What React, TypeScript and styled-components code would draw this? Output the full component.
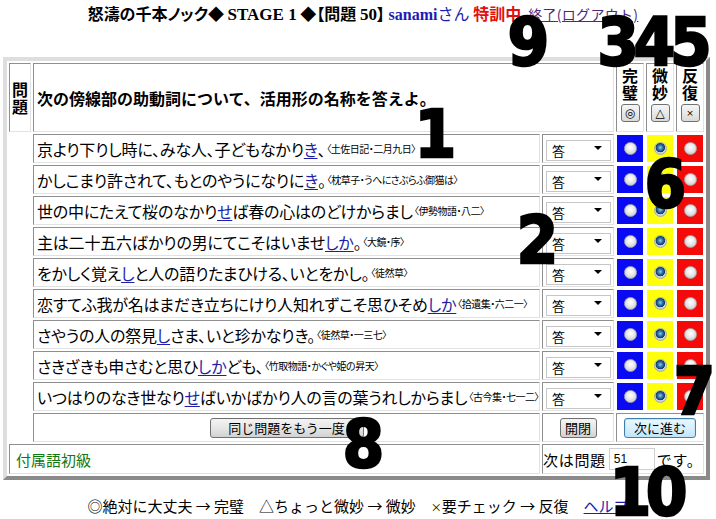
import React from "react";
import styled, { createGlobalStyle, css } from "styled-components";

const GlobalStyle = createGlobalStyle`
  html, body {
    margin: 0;
    padding: 0;
    background: #fff;
  }
  body {
    font-family: "Noto Sans CJK JP", sans-serif;
    color: #000;
  }
`;

const Page = styled.div`
  position: relative;
  width: 716px;
  height: 519px;
  overflow: hidden;
`;

const TitleBar = styled.div`
  height: 26px;
  line-height: 26px;
  margin-bottom: 31px;
  padding-left: 10px;
  text-align: center;
  white-space: pre;
  font-size: 16px;
  font-weight: bold;
  font-feature-settings: "palt";
`;

const Serif = styled.span`
  font-family: "Liberation Serif", serif;
  font-size: 17px;
  font-weight: bold;
`;

const UserName = styled(Serif)`
  color: #1c1cb4;
  font-size: 16px;
`;

const San = styled.span`
  color: #1c1cb4;
  font-weight: normal;
  font-feature-settings: normal;
`;

const Training = styled.span`
  color: #e01010;
  font-feature-settings: normal;
`;

const Logout = styled.a`
  margin-left: 7px;
  font-size: 14px;
  letter-spacing: 0.3px;
  font-weight: normal;
  font-feature-settings: normal;
  color: #4b2a7a;
  text-decoration: underline;
`;

const Board = styled.div`
  display: grid;
  grid-template-columns: 22px 507px 72px 28px 28px 28px;
  grid-template-rows: 69px repeat(9, 29px) 29px 30px;
  gap: 2px;
  padding: 2px;
  width: max-content;
  margin-left: 3px;
  border: 4px solid;
  border-color: #dedede #8a8a8a #8a8a8a #dedede;
`;

const Cell = styled.div<{ $span?: number; $center?: boolean }>`
  grid-column: span ${(p) => p.$span ?? 1};
  box-sizing: border-box;
  border: 1px solid;
  border-color: #8f8f8f #e2e2e2 #e2e2e2 #8f8f8f;
  background: #fff;
  display: flex;
  align-items: center;
  justify-content: ${(p) => (p.$center ? "center" : "flex-start")};
  min-width: 0;
`;

const Blank = styled.div``;

const StackLabel = styled(Cell)`
  flex-direction: column;
  justify-content: center;
  font-size: 16px;
  font-weight: bold;
  line-height: 17px;
`;

const Question = styled(Cell)`
  padding-left: 3px;
  font-size: 16px;
  font-weight: bold;
`;

const RankHead = styled(Cell)`
  flex-direction: column;
  justify-content: flex-start;
  padding-top: 3px;
  font-size: 16px;
  font-weight: bold;
  line-height: 17px;
`;

const MiniButton = styled.button<{ $small?: boolean }>`
  margin-top: 3px;
  width: 19px;
  height: 18px;
  padding: 0;
  border: 1px solid #707070;
  border-radius: 3px;
  background: linear-gradient(#f6f6f6, #dadada);
  font-family: "DejaVu Sans", sans-serif;
  font-size: ${(p) => (p.$small ? "9px" : "12px")};
  line-height: 16px;
  color: #000;
`;

const Sentence = styled(Cell)`
  padding-left: 3px;
  font-size: 16px;
  letter-spacing: -0.2px;
  white-space: nowrap;
  overflow: hidden;
  font-feature-settings: "palt";
`;

const Mark = styled.span`
  color: #1e1ea8;
  text-decoration: underline;
  text-underline-offset: 2px;
`;

const Note = styled.span`
  font-size: 10px;
  letter-spacing: -0.5px;
  margin-left: 1px;
`;

const SelectBox = styled.div`
  position: relative;
  margin-left: 3px;
  &::after {
    content: "";
    position: absolute;
    right: 9px;
    top: 9px;
    border-left: 4px solid transparent;
    border-right: 4px solid transparent;
    border-top: 4px solid #000;
    pointer-events: none;
  }
`;

const Select = styled.select`
  appearance: none;
  width: 65px;
  height: 21px;
  padding: 0 0 0 5px;
  border: 1px solid #c6c6c6;
  background: #fff;
  font-family: "Noto Sans CJK JP", sans-serif;
  font-size: 13px;
  color: #000;
`;

const ColorCell = styled.div<{ $color: string }>`
  box-sizing: border-box;
  border: 1px solid #fff;
  background: ${(p) => p.$color};
  display: flex;
  align-items: center;
  justify-content: center;
`;

const Radio = styled.input`
  appearance: none;
  margin: 0;
  width: 13px;
  height: 13px;
  border-radius: 50%;
  border: 1px solid #a4abb2;
  box-sizing: border-box;
  background: radial-gradient(circle at 50% 40%, #ffffff 0%, #e8e8e8 45%, #bcbcbc 100%);
  ${(p) =>
    p.checked &&
    css`
      background: radial-gradient(
        circle at 48% 42%,
        #9cc8ea 0%,
        #2c6ea4 30%,
        #0f3b68 52%,
        #d6d6d6 58%,
        #b4b4b4 100%
      );
    `}
`;

const PushButton = styled.button<{ $w: number; $primary?: boolean }>`
  width: ${(p) => p.$w}px;
  height: 20px;
  padding: 0;
  border: 1px solid #707070;
  border-radius: 3px;
  background: linear-gradient(#f4f4f4 0%, #e6e6e6 50%, #d2d2d2 100%);
  font-family: "Noto Sans CJK JP", sans-serif;
  font-size: 13px;
  line-height: 18px;
  color: #000;
  ${(p) =>
    p.$primary &&
    css`
      border-color: #3c7fb1;
      background: linear-gradient(#eaf6fd 0%, #d9f0fc 50%, #bee6fd 100%);
      box-shadow: inset 0 0 0 1px #c4e5f6;
    `}
`;

const Series = styled(Cell)`
  padding-left: 6px;
  color: #117711;
  font-size: 15px;
`;

const NextInfo = styled(Cell)`
  font-size: 15px;
  white-space: nowrap;
  letter-spacing: 0.7px;
`;

const NumInput = styled.input`
  width: 46px;
  height: 22px;
  margin: 0 2px 0 3px;
  box-sizing: border-box;
  padding: 0 4px;
  border: 1px solid #cfcfcf;
  font-family: "Liberation Sans", sans-serif;
  font-size: 12px;
`;

const Legend = styled.div`
  margin-top: 17px;
  height: 18px;
  line-height: 18px;
  text-align: center;
  font-size: 15px;
  white-space: pre;
`;

const Cross = styled.span`
  font-size: 11px;
`;

const Help = styled.a`
  color: #1c1cb4;
  text-decoration: underline;
`;

const Callout = styled.div<{ $x: number; $y: number }>`
  position: absolute;
  left: ${(p) => p.$x}px;
  top: ${(p) => p.$y - 8}px;
  transform: translateX(-50%);
  font-family: "DejaVu Sans", sans-serif;
  font-stretch: condensed;
  font-weight: bold;
  font-size: 66px;
  line-height: 66px;
  letter-spacing: -5px;
  color: #000;
  -webkit-text-stroke: 2.5px #000;
  text-shadow: 0 0 1px #fff;
  pointer-events: none;
`;

type Row = {
  before: string;
  mark: string;
  after: string;
  note: string;
};

const rows: Row[] = [
  { before: "京より下りし時に、みな人、子どもなかり", mark: "き", after: "、", note: "〈土佐日記・二月九日〉" },
  { before: "かしこまり許されて、もとのやうになりに", mark: "き", after: "。", note: "〈枕草子・うへにさぶらふ御猫は〉" },
  { before: "世の中にたえて桜のなかり", mark: "せ", after: "ば春の心はのどけからまし", note: "〈伊勢物語・八二〉" },
  { before: "主は二十五六ばかりの男にてこそはいませ", mark: "しか", after: "。", note: "〈大鏡・序〉" },
  { before: "をかしく覚え", mark: "し", after: "と人の語りたまひける、いとをかし。", note: "〈徒然草〉" },
  { before: "恋すてふ我が名はまだき立ちにけり人知れずこそ思ひそめ", mark: "しか", after: "", note: "〈拾遺集・六二一〉" },
  { before: "さやうの人の祭見", mark: "し", after: "さま、いと珍かなりき。", note: "〈徒然草・一三七〉" },
  { before: "さきざきも申さむと思ひ", mark: "しか", after: "ども、", note: "〈竹取物語・かぐや姫の昇天〉" },
  { before: "いつはりのなき世なり", mark: "せ", after: "ばいかばかり人の言の葉うれしからまし", note: "〈古今集・七一二〉" },
];

const ranks = [
  { color: "#0a0af2", value: "perfect" },
  { color: "#ffff0a", value: "subtle" },
  { color: "#f50a0a", value: "repeat" },
];

const callouts = [
  { text: "9", x: 526, y: 18 },
  { text: "345", x: 652, y: 18 },
  { text: "1", x: 433, y: 110 },
  { text: "6", x: 663, y: 160 },
  { text: "2", x: 535, y: 216 },
  { text: "7", x: 692, y: 367 },
  { text: "8", x: 361, y: 420 },
  { text: "10", x: 646, y: 468 },
];

const App = () => {
  return (
    <Page>
      <GlobalStyle />
      <TitleBar>
        怒濤の千本ノック◆ <Serif>STAGE 1</Serif> ◆【問題 <Serif>50</Serif>】 <UserName>sanami</UserName>
        <San>さん</San> <Training>特訓中</Training>
        <Logout href="#">終了(ログアウト)</Logout>
      </TitleBar>

      <Board>
        <StackLabel $center>
          <span>問</span>
          <span>題</span>
        </StackLabel>
        <Question $span={2}>次の傍線部の助動詞について、活用形の名称を答えよ。</Question>
        <RankHead $center>
          <span>完</span>
          <span>璧</span>
          <MiniButton>◎</MiniButton>
        </RankHead>
        <RankHead $center>
          <span>微</span>
          <span>妙</span>
          <MiniButton>△</MiniButton>
        </RankHead>
        <RankHead $center>
          <span>反</span>
          <span>復</span>
          <MiniButton $small>×</MiniButton>
        </RankHead>

        {rows.map((row, i) => (
          <React.Fragment key={i}>
            <Blank />
            <Sentence>
              {row.before}
              <Mark>{row.mark}</Mark>
              {row.after}
              <Note>{row.note}</Note>
            </Sentence>
            <Cell>
              <SelectBox>
                <Select defaultValue="答">
                  <option>答</option>
                  <option>未然形</option>
                  <option>連用形</option>
                  <option>終止形</option>
                  <option>連体形</option>
                  <option>已然形</option>
                  <option>命令形</option>
                </Select>
              </SelectBox>
            </Cell>
            {ranks.map((rank) => (
              <ColorCell key={rank.value} $color={rank.color}>
                <Radio
                  type="radio"
                  name={`rank-${i}`}
                  value={rank.value}
                  checked={rank.value === "subtle"}
                  readOnly
                />
              </ColorCell>
            ))}
          </React.Fragment>
        ))}

        <Blank />
        <Cell $center>
          <PushButton $w={154}>同じ問題をもう一度</PushButton>
        </Cell>
        <Cell $center>
          <PushButton $w={37}>開閉</PushButton>
        </Cell>
        <Cell $span={3} $center>
          <PushButton $w={72} $primary>
            次に進む
          </PushButton>
        </Cell>

        <Series $span={2}>付属語初級</Series>
        <NextInfo $span={4}>
          次は問題
          <NumInput defaultValue="51" />
          です。
        </NextInfo>
      </Board>

      <Legend>
        ◎絶対に大丈夫 → 完璧　△ちょっと微妙 → 微妙　<Cross>×</Cross>要チェック → 反復　<Help href="#">ヘルプ</Help>
      </Legend>

      {callouts.map((c) => (
        <Callout key={c.text} $x={c.x} $y={c.y}>
          {c.text}
        </Callout>
      ))}
    </Page>
  );
};

export default App;
